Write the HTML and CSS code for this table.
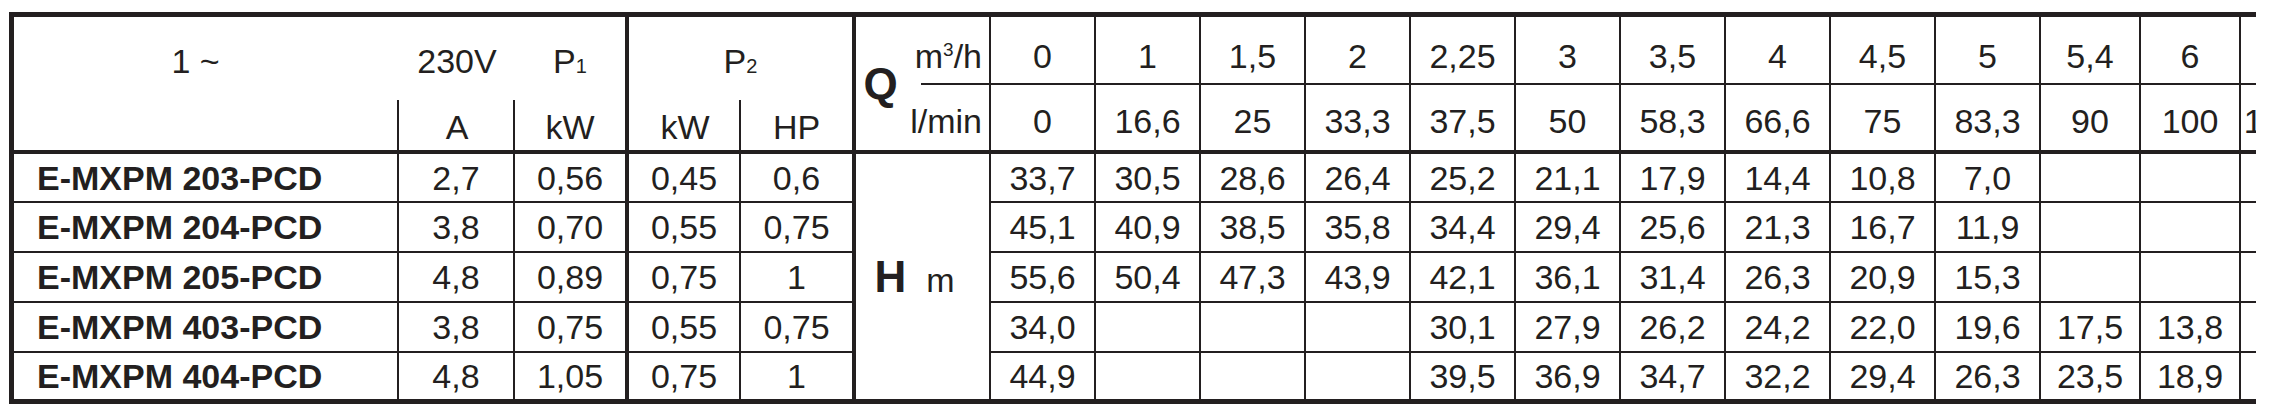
FILE: index.html
```html
<!DOCTYPE html>
<html lang="it">
<head>
    <meta charset="UTF-8">
    <meta name="viewport" content="width=device-width, initial-scale=1.0">
    <title>E-MXPM PCD - tabella prestazioni</title>
    <link rel="stylesheet" href="styles.css">
</head>
<body>
    <div class="frame">
    <div class="chart">

        <!-- intestazione: tensione, potenze, portata Q -->
        <div class="row">
            <div class="c h-name">1 ~</div>
            <div class="c h-top">230V</div>
            <div class="c h-top thick"><span>P<span class="sub">1</span></span></div>
            <div class="c h-top thick span2"><span>P<span class="sub">2</span></span></div>
            <div class="c h-q">Q</div>
            <div class="c h-unit1"><span>m<sup>3</sup>/h</span></div>
            <div class="c q1">0</div>
            <div class="c q1">1</div>
            <div class="c q1">1,5</div>
            <div class="c q1">2</div>
            <div class="c q1">2,25</div>
            <div class="c q1">3</div>
            <div class="c q1">3,5</div>
            <div class="c q1">4</div>
            <div class="c q1">4,5</div>
            <div class="c q1">5</div>
            <div class="c q1">5,4</div>
            <div class="c q1">6</div>
            <div class="c q1"></div>
        </div>

        <div class="row">
            <div class="c h-sub split"></div>
            <div class="c h-sub split">A</div>
            <div class="c h-sub thick">kW</div>
            <div class="c h-sub split">kW</div>
            <div class="c h-sub thick">HP</div>
            <div class="c h-unit2">l/min</div>
            <div class="c q2">0</div>
            <div class="c q2">16,6</div>
            <div class="c q2">25</div>
            <div class="c q2">33,3</div>
            <div class="c q2">37,5</div>
            <div class="c q2">50</div>
            <div class="c q2">58,3</div>
            <div class="c q2">66,6</div>
            <div class="c q2">75</div>
            <div class="c q2">83,3</div>
            <div class="c q2">90</div>
            <div class="c q2">100</div>
            <div class="c q2">116,6</div>
        </div>

        <!-- modelli: prevalenza H in m -->
        <div class="row">
            <div class="c name">E-MXPM 203-PCD</div>
            <div class="c v">2,7</div>
            <div class="c v thick">0,56</div>
            <div class="c v">0,45</div>
            <div class="c v thick">0,6</div>
            <div class="c hm"><span><b>H</b>m</span></div>
            <div class="c v">33,7</div>
            <div class="c v">30,5</div>
            <div class="c v">28,6</div>
            <div class="c v">26,4</div>
            <div class="c v">25,2</div>
            <div class="c v">21,1</div>
            <div class="c v">17,9</div>
            <div class="c v">14,4</div>
            <div class="c v">10,8</div>
            <div class="c v">7,0</div>
            <div class="c v"></div>
            <div class="c v"></div>
            <div class="c v"></div>
        </div>

        <div class="row">
            <div class="c name">E-MXPM 204-PCD</div>
            <div class="c v">3,8</div>
            <div class="c v thick">0,70</div>
            <div class="c v">0,55</div>
            <div class="c v thick">0,75</div>
            <div class="c v">45,1</div>
            <div class="c v">40,9</div>
            <div class="c v">38,5</div>
            <div class="c v">35,8</div>
            <div class="c v">34,4</div>
            <div class="c v">29,4</div>
            <div class="c v">25,6</div>
            <div class="c v">21,3</div>
            <div class="c v">16,7</div>
            <div class="c v">11,9</div>
            <div class="c v"></div>
            <div class="c v"></div>
            <div class="c v"></div>
        </div>

        <div class="row">
            <div class="c name">E-MXPM 205-PCD</div>
            <div class="c v">4,8</div>
            <div class="c v thick">0,89</div>
            <div class="c v">0,75</div>
            <div class="c v thick">1</div>
            <div class="c v">55,6</div>
            <div class="c v">50,4</div>
            <div class="c v">47,3</div>
            <div class="c v">43,9</div>
            <div class="c v">42,1</div>
            <div class="c v">36,1</div>
            <div class="c v">31,4</div>
            <div class="c v">26,3</div>
            <div class="c v">20,9</div>
            <div class="c v">15,3</div>
            <div class="c v"></div>
            <div class="c v"></div>
            <div class="c v"></div>
        </div>

        <div class="row">
            <div class="c name">E-MXPM 403-PCD</div>
            <div class="c v">3,8</div>
            <div class="c v thick">0,75</div>
            <div class="c v">0,55</div>
            <div class="c v thick">0,75</div>
            <div class="c v">34,0</div>
            <div class="c v"></div>
            <div class="c v"></div>
            <div class="c v"></div>
            <div class="c v">30,1</div>
            <div class="c v">27,9</div>
            <div class="c v">26,2</div>
            <div class="c v">24,2</div>
            <div class="c v">22,0</div>
            <div class="c v">19,6</div>
            <div class="c v">17,5</div>
            <div class="c v">13,8</div>
            <div class="c v"></div>
        </div>

        <div class="row end">
            <div class="c name">E-MXPM 404-PCD</div>
            <div class="c v">4,8</div>
            <div class="c v thick">1,05</div>
            <div class="c v">0,75</div>
            <div class="c v thick">1</div>
            <div class="c v">44,9</div>
            <div class="c v"></div>
            <div class="c v"></div>
            <div class="c v"></div>
            <div class="c v">39,5</div>
            <div class="c v">36,9</div>
            <div class="c v">34,7</div>
            <div class="c v">32,2</div>
            <div class="c v">29,4</div>
            <div class="c v">26,3</div>
            <div class="c v">23,5</div>
            <div class="c v">18,9</div>
            <div class="c v"></div>
        </div>

    </div>
    </div>
</body>
</html>
```

FILE: styles.css
```css
body {
    margin: 0;
    padding: 12px 0 0 9px;
    background-color: #fff;
    color: #231f20;
    font-family: "Liberation Sans", Arial, Helvetica, sans-serif;
}
/* la tabella continua oltre il bordo destro */
.frame {
    width: 2247px;
    overflow: hidden;
}
.chart {
    display: grid;
    grid-template-columns: 385px 116px 114px 112px 115px 49px 86px repeat(10, 105px) 100px 100px 90px;
    grid-template-rows: 68px 69px 49px 50px 50px 50px 51px;
    width: max-content;
    border-top: 5px solid #231f20;
    border-left: 5px solid #231f20;
    font-size: 34px;
    line-height: 1;
}
.row {
    display: contents;
}
.c {
    box-sizing: border-box;
    display: flex;
    align-items: center;
    justify-content: center;
    border: 0 solid #231f20;
}
.thick {
    border-right-width: 4px !important;
}
.span2 {
    grid-column: span 2;
}
.sub {
    font-size: 20px;
}
sup {
    font-size: 19px;
    vertical-align: super;
    line-height: 1;
}

/* intestazione */
.h-name {
    align-items: flex-start;
    padding: 27px 22px 0 0;
}
.h-top {
    align-items: flex-start;
    padding-top: 27px;
}
.h-sub {
    align-items: flex-start;
    padding-top: 25px;
    border-bottom-width: 4px;
}
.split {
    background: linear-gradient(#231f20, #231f20) right 0 top 15px / 2px 100% no-repeat;
}
.h-q {
    grid-column: 6;
    grid-row: 1 / 3;
    font-size: 44px;
    font-weight: bold;
    border-bottom-width: 4px;
}
.h-unit1 {
    justify-content: flex-end;
    align-items: flex-start;
    padding: 22px 7px 0 0;
    border-right-width: 2px;
    background: linear-gradient(#231f20, #231f20) right bottom / calc(100% - 16px) 2px no-repeat;
}
.h-unit2 {
    justify-content: flex-end;
    align-items: flex-start;
    padding: 19px 7px 0 0;
    border-right-width: 2px;
    border-bottom-width: 4px;
}
.q1 {
    align-items: flex-start;
    padding-top: 22px;
    border-right-width: 2px;
    border-bottom-width: 2px;
}
.q2 {
    align-items: flex-start;
    padding-top: 19px;
    border-right-width: 2px;
    border-bottom-width: 4px;
}

/* corpo */
.name {
    justify-content: flex-start;
    padding-left: 23px;
    font-weight: bold;
    border-right-width: 2px;
    border-bottom-width: 2px;
}
.v {
    border-right-width: 2px;
    border-bottom-width: 2px;
}
.end .c {
    border-bottom-width: 5px;
}
.hm {
    grid-column: 6 / 8;
    grid-row: 3 / 8;
    padding-right: 16px;
    border-right-width: 2px;
    border-bottom-width: 5px;
}
.hm b {
    font-size: 44px;
    margin-right: 20px;
}
```
